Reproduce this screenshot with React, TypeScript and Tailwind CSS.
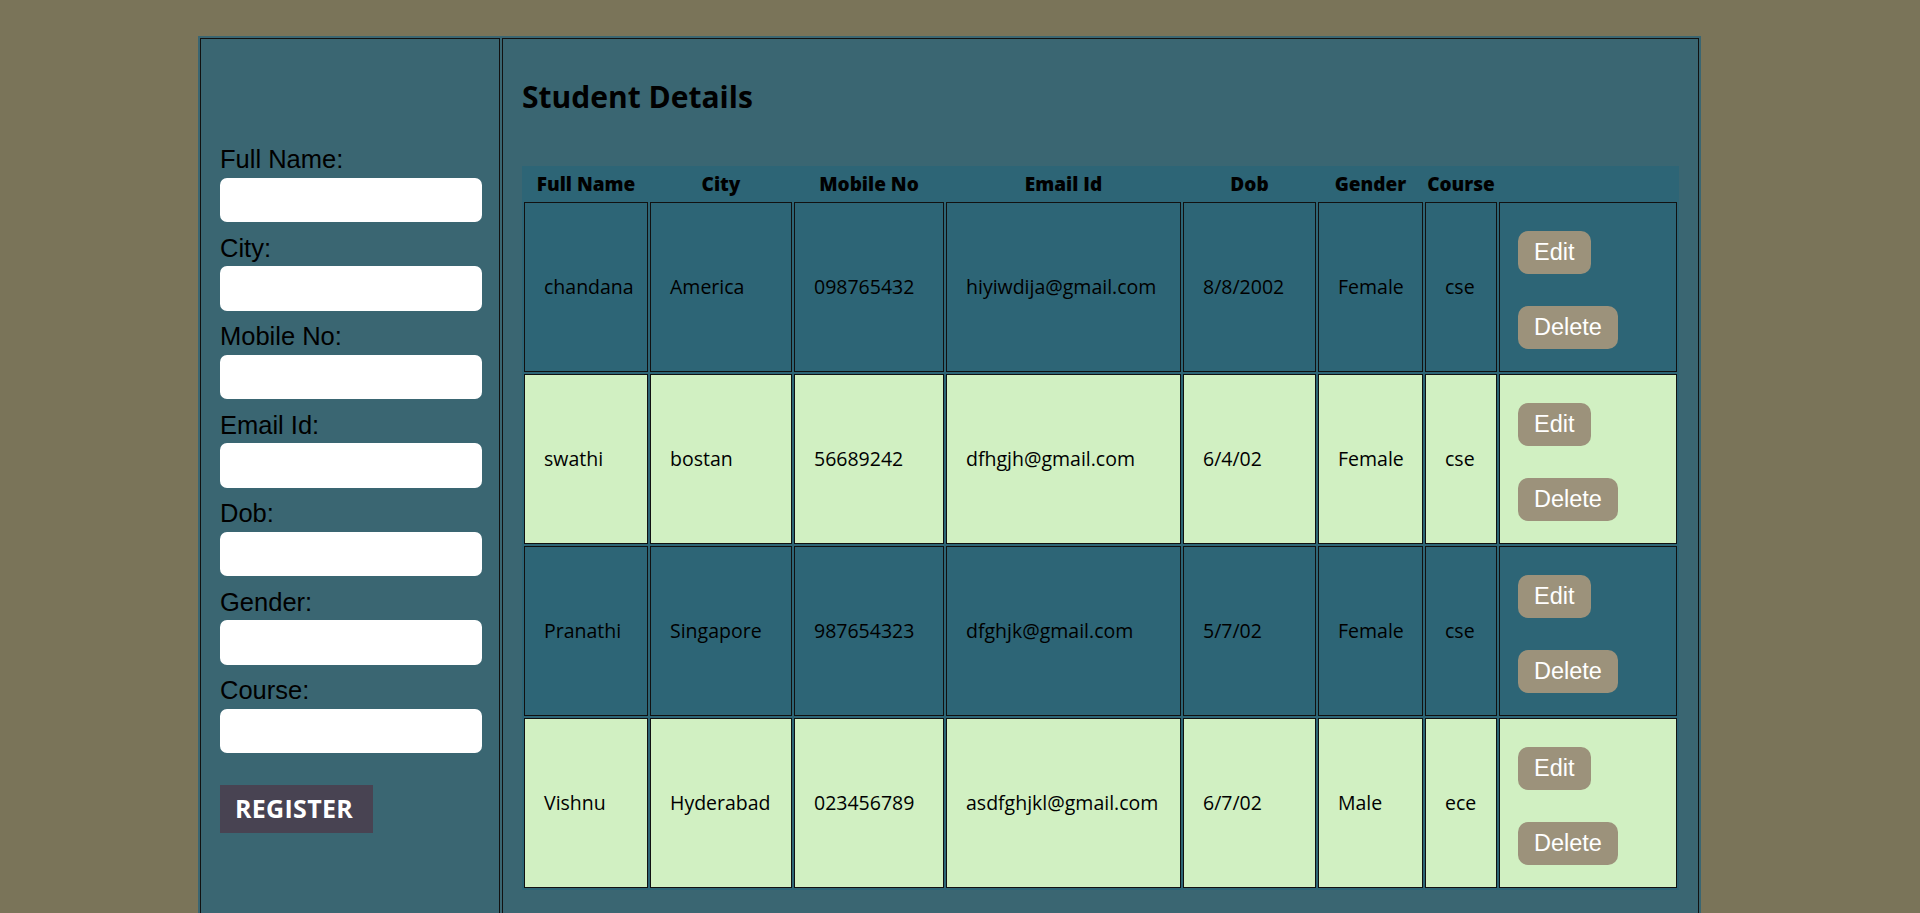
import React from "react";

const fields = ["Full Name:", "City:", "Mobile No:", "Email Id:", "Dob:", "Gender:", "Course:"];

const headers = ["Full Name", "City", "Mobile No", "Email Id", "Dob", "Gender", "Course", ""];

const rows = [
  ["chandana", "America", "098765432", "hiyiwdija@gmail.com", "8/8/2002", "Female", "cse"],
  ["swathi", "bostan", "56689242", "dfhgjh@gmail.com", "6/4/02", "Female", "cse"],
  ["Pranathi", "Singapore", "987654323", "dfghjk@gmail.com", "5/7/02", "Female", "cse"],
  ["Vishnu", "Hyderabad", "023456789", "asdfghjkl@gmail.com", "6/7/02", "Male", "ece"],
];

const comic = { fontFamily: "'Open Sans', 'DejaVu Sans', sans-serif" };

export default function App() {
  return (
    <div className="min-h-screen bg-[#7a7459] pt-[36px] pb-[2px]">
      <div className="ml-[198px] w-[1503px] flex gap-[2px] p-[2px] bg-[#3a6672]">
        {/* Left form panel */}
        <div className="w-[300px] h-[902px] shrink-0 border border-[#111] pl-[19px] pt-[106px] font-['Liberation_Sans',Arial,sans-serif]">
          {fields.map((f) => (
            <div key={f} className="pb-[11.5px]">
              <div className="text-[25.5px] leading-[29.5px] text-black">{f}</div>
              <input
                type="text"
                className="block mt-[3px] h-[44.5px] w-[262px] rounded-[7px] bg-white outline-none border-0"
              />
            </div>
          ))}
          <button
            className="mt-[20px] w-[153px] h-[48px] bg-[#484352] text-white font-bold text-[25px] flex items-center pl-[15px] tracking-[0.3px]"
            style={comic}
          >
            REGISTER
          </button>
        </div>

        {/* Right panel */}
        <div className="flex-1 h-[902px] border border-[#111] pl-[19px] pt-[38px]" style={comic}>
          <h1 className="text-[30px] leading-[40px] font-bold text-black">Student Details</h1>
          <div className="mt-[49px] w-[1157px] grid grid-cols-[124px_142px_150px_235px_133px_105px_72px_178px] gap-[2px] p-[2px] bg-[#2d6576]">
            {headers.map((h, i) => (
              <div
                key={i}
                className="h-[31.5px] flex items-center justify-center font-extrabold text-[19px] text-black whitespace-nowrap"
              >
                {h}
              </div>
            ))}
            {rows.map((r, ri) => {
              const bg = ri % 2 === 0 ? "bg-[#2d6576]" : "bg-[#d1f0c2]";
              return (
                <React.Fragment key={ri}>
                  {r.map((c, ci) => (
                    <div
                      key={ci}
                      className={`${bg} h-[170px] border border-[#111] flex items-center pl-[19px] text-[19.5px] text-black whitespace-nowrap`}
                    >
                      {c}
                    </div>
                  ))}
                  <div className={`${bg} h-[170px] border border-[#111] flex flex-col items-start pl-[18px] pt-[28px] gap-[32px] font-['Liberation_Sans',Arial,sans-serif]`}>
                    <button className="h-[43px] px-[16px] rounded-[10px] bg-[#9c927b] text-white text-[23.5px] leading-[27px]">
                      Edit
                    </button>
                    <button className="h-[43px] px-[16px] rounded-[10px] bg-[#9c927b] text-white text-[23.5px] leading-[27px]">
                      Delete
                    </button>
                  </div>
                </React.Fragment>
              );
            })}
          </div>
        </div>
      </div>
    </div>
  );
}
